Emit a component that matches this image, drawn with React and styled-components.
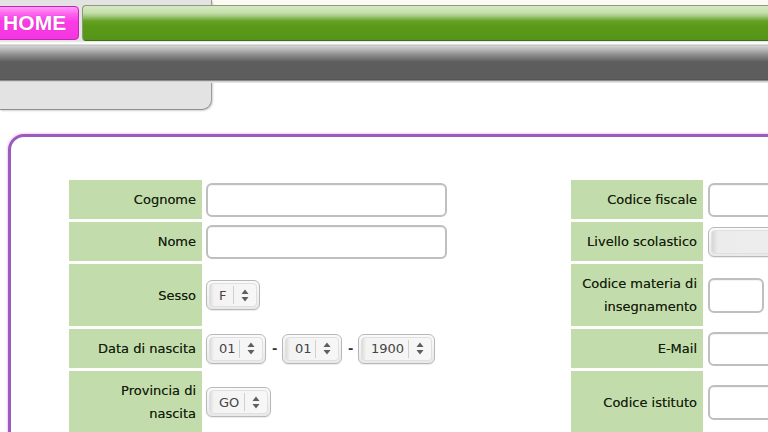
import React from "react";
import styled, { createGlobalStyle } from "styled-components";

const GlobalStyle = createGlobalStyle`
  html, body { margin: 0; padding: 0; background: #ffffff; overflow: hidden; }
  body { font-family: "DejaVu Sans", Verdana, sans-serif; }
  #root { width: 768px; height: 432px; overflow: hidden; }
`;

const Header = styled.header`
  display: grid;
  grid-template-columns: 212px 1fr;
  grid-template-rows: 5px 36px 42px 27px;
  background: linear-gradient(#fbfbf4 0, #fbfbf4 5px, #ffffff 5px);
`;

const SidePanel = styled.div`
  grid-column: 1;
  grid-row: 1 / -1;
  background: #e3e3e3;
  border-right: 1px solid #9a9a9a;
  border-bottom: 1px solid #8e8e8e;
  border-bottom-right-radius: 10px;
  box-shadow: 1px 1px 2px rgba(0, 0, 0, 0.18);
`;

const TabRow = styled.nav`
  grid-column: 1 / -1;
  grid-row: 2;
  display: flex;
  gap: 3px;
  padding-top: 1px;
  box-sizing: border-box;
`;

const HomeTab = styled.a`
  display: flex;
  align-items: center;
  width: 80px;
  height: 34px;
  box-sizing: border-box;
  padding-left: 3px;
  margin-left: -1px;
  border: 1px solid #c224b4;
  border-radius: 0 4px 4px 0;
  background: linear-gradient(#ff9cf6 0%, #ff62ef 22%, #fb3ce6 45%, #f535e1 100%);
  color: #ffffff;
  font-family: "Liberation Sans", Arial, sans-serif;
  font-weight: bold;
  font-size: 21px;
  letter-spacing: 0.1px;
  text-shadow: 0 0 1px rgba(120, 0, 100, 0.5);
  text-decoration: none;
`;

const GreenBar = styled.div`
  flex: 1;
  height: 36px;
  margin-top: -1px;
  box-sizing: border-box;
  border: 1px solid #8b9b7a;
  border-right: none;
  border-bottom-color: #3f6d12;
  border-radius: 4px 0 0 4px;
  background: linear-gradient(
    #d6e9c3 0%,
    #c6dfad 20%,
    #9fc678 31%,
    #64a224 44%,
    #5a9a18 60%,
    #55941a 100%
  );
`;

const GreyBar = styled.div`
  grid-column: 1 / -1;
  grid-row: 3;
  background: linear-gradient(
    #d6d6d6 0px,
    #f7f7f7 1px,
    #ffffff 3px,
    #bcbcbc 4px,
    #d2d2d2 5px,
    #b4b4b4 9px,
    #8c8c8c 14px,
    #646464 20px,
    #5d5d5d 21px,
    #5d5d5d 38px,
    #4c4c4c 39px,
    #c8c8c8 40px,
    #ececec 42px
  );
`;

const ContentBox = styled.main`
  margin: 24px 0 0 8px;
  width: 820px;
  height: 400px;
  box-sizing: border-box;
  border: 3px solid #9a5cbd;
  border-radius: 16px 16px 0 0;
  box-shadow: 0 0 2px 1px rgba(238, 170, 236, 0.6);
  background: #ffffff;
  padding: 43px 0 0 58px;
`;

const FormGrid = styled.div`
  display: grid;
  grid-template-columns: 133px 361px 132px 1fr;
  column-gap: 4px;
  row-gap: 3px;
`;

const Label = styled.div`
  background: #c3dcab;
  color: #141d0d;
  font-size: 13px;
  line-height: 23px;
  text-align: right;
  padding: 8px 6px;
  min-height: 23px;
  display: flex;
  align-items: center;
  justify-content: flex-end;
  text-shadow: 0 0 0.4px rgba(20, 29, 13, 0.6);
`;

const Value = styled.div`
  display: flex;
  align-items: center;
  gap: 6px;
  ${(p) => (p.$right ? "padding-left: 1px;" : "")}
`;

const TextInput = styled.input`
  width: ${(p) => p.$w || 241}px;
  height: ${(p) => p.$h || 34}px;
  box-sizing: border-box;
  border: 2px solid #bfbfbf;
  border-radius: 6px;
  background: #ffffff;
  box-shadow: inset 0 1px 1px rgba(0, 0, 0, 0.05);
  outline: none;
  padding: 0 6px;
  font-family: "DejaVu Sans", Verdana, sans-serif;
  font-size: 13px;
`;

const SelectBox = styled.div`
  display: inline-flex;
  align-items: stretch;
  width: ${(p) => p.$w}px;
  height: 30px;
  box-sizing: border-box;
  border: 1px solid #b8b8b8;
  border-radius: 6px;
  padding: 2px;
  background: linear-gradient(#fafafa, #e9e9e9);
  box-shadow: 0 1px 1px rgba(0, 0, 0, 0.08);
`;

const SelectInner = styled.div`
  flex: 1;
  display: flex;
  align-items: center;
  border-radius: 4px;
  border: 1px solid #e0e0e0;
  background: ${(p) =>
    p.$plain
      ? "linear-gradient(90deg, #d6d6d6 0, #ececec 6px, #f0f0f0 100%)"
      : "linear-gradient(90deg, #dcdcdc 0, #f3f3f3 4px, #f7f7f7 100%)"};
  min-width: 0;
`;

const SelectValue = styled.span`
  flex: 1;
  padding-left: ${(p) => p.$pad || 9}px;
  font-size: 13px;
  color: #444444;
  white-space: nowrap;
`;

const SelectDivider = styled.span`
  width: 1px;
  align-self: stretch;
  margin: 2px 0;
  background: #d0d0d0;
`;

const ArrowWrap = styled.span`
  width: 22px;
  display: flex;
  align-items: center;
  justify-content: center;
`;

const Dash = styled.span`
  font-size: 13px;
  font-weight: bold;
  color: #333;
  width: 4px;
  text-align: center;
`;

const Arrows = () => (
  <svg width="8" height="13" viewBox="0 0 8 13">
    <path d="M4 0.5 L7.5 5 L0.5 5 Z" fill="#5e5e5e" />
    <path d="M4 12.5 L7.5 8 L0.5 8 Z" fill="#5e5e5e" />
  </svg>
);

const Select = ({ value, w, pad }) => (
  <SelectBox $w={w}>
    <SelectInner>
      <SelectValue $pad={pad}>{value}</SelectValue>
      <SelectDivider />
      <ArrowWrap>
        <Arrows />
      </ArrowWrap>
    </SelectInner>
  </SelectBox>
);

const EmptySelect = ({ w }) => (
  <SelectBox $w={w}>
    <SelectInner $plain />
  </SelectBox>
);

export default function App() {
  return (
    <>
      <GlobalStyle />
      <Header>
        <SidePanel />
        <TabRow>
          <HomeTab href="#">HOME</HomeTab>
          <GreenBar />
        </TabRow>
        <GreyBar />
      </Header>
      <ContentBox>
        <FormGrid>
          <Label>Cognome</Label>
          <Value>
            <TextInput />
          </Value>
          <Label>Codice fiscale</Label>
          <Value $right>
            <TextInput />
          </Value>

          <Label>Nome</Label>
          <Value>
            <TextInput />
          </Value>
          <Label>Livello scolastico</Label>
          <Value $right>
            <EmptySelect w={220} />
          </Value>

          <Label>Sesso</Label>
          <Value>
            <Select value="F" w={54} />
          </Value>
          <Label>Codice materia di insegnamento</Label>
          <Value $right>
            <TextInput $w={56} $h={35} />
          </Value>

          <Label>Data di nascita</Label>
          <Value>
            <Select value="01" w={60} />
            <Dash>-</Dash>
            <Select value="01" w={60} />
            <Dash>-</Dash>
            <Select value="1900" w={77} />
          </Value>
          <Label>E-Mail</Label>
          <Value $right>
            <TextInput />
          </Value>

          <Label>Provincia di nascita</Label>
          <Value>
            <Select value="GO" w={65} />
          </Value>
          <Label>Codice istituto</Label>
          <Value $right>
            <TextInput $h={35} />
          </Value>
        </FormGrid>
      </ContentBox>
    </>
  );
}
